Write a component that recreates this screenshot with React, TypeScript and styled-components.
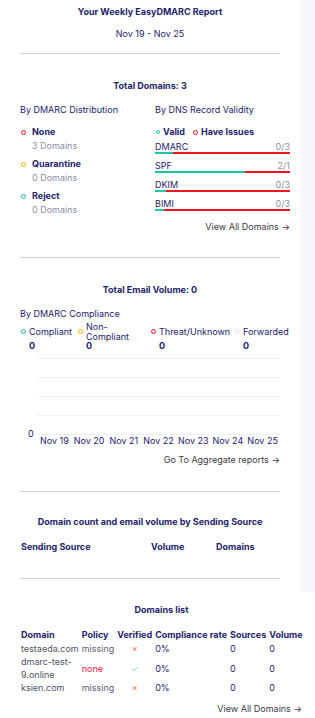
import React from "react";
import styled, { createGlobalStyle } from "styled-components";

const Global = createGlobalStyle`
  html, body { margin: 0; padding: 0; background: #ffffff; overflow-x: hidden; }
  body { font-family: Inter, "Noto Sans", "Liberation Sans", sans-serif; -webkit-font-smoothing: antialiased; }
  * { box-sizing: border-box; }
`;

const NAVY = "#23236a";
const GRAY = "#8b8fa5";
const TEAL = "#1bc5a5";
const RED = "#f0141e";
const ORANGE = "#f5b300";
const FS = "9px";

const Page = styled.div`
  width: 315px;
  color: ${NAVY};
  font-size: ${FS};
`;

const TopBand = styled.div`
  display: flex;
  background: #f6f7fb;
`;

const Card = styled.div`
  width: 300px;
  background: #ffffff;
  padding: 5px 20px 13px;
`;

const Title = styled.div<{ $mt?: number }>`
  font-weight: 700;
  line-height: 14px;
  text-align: center;
  margin-top: ${(p) => p.$mt ?? 0}px;
`;

const DateLine = styled.div`
  line-height: 14px;
  text-align: center;
  margin-top: 8px;
`;

const Divider = styled.div<{ $mt: number }>`
  height: 1px;
  background: #cfd3de;
  margin-top: ${(p) => p.$mt}px;
`;

const Sub = styled.div<{ $mt?: number }>`
  line-height: 14px;
  margin-top: ${(p) => p.$mt ?? 0}px;
`;

const TwoCols = styled.div`
  display: grid;
  grid-template-columns: 135px 135px;
  margin-top: 10px;
`;

const Ring = styled.span<{ $c: string; $s?: number }>`
  display: inline-block;
  width: ${(p) => p.$s ?? 5}px;
  height: ${(p) => p.$s ?? 5}px;
  border-radius: 50%;
  border: 1.3px solid ${(p) => p.$c};
  flex: none;
`;

const DistList = styled.div`
  display: flex;
  flex-direction: column;
  gap: 4px;
  margin-top: 8px;
`;

const DistItem = styled.div`
  display: grid;
  grid-template-columns: 11px auto;
  align-items: center;
  padding-left: 1px;
`;

const DistName = styled.div`
  font-weight: 700;
  line-height: 14px;
`;

const DistCount = styled.div`
  grid-column: 2;
  line-height: 14px;
  color: ${GRAY};
`;

const Legend = styled.div`
  display: flex;
  align-items: center;
  gap: 8px;
  margin-top: 8px;
  padding-left: 1px;
`;

const LegendItem = styled.div`
  display: flex;
  align-items: center;
  gap: 3px;
  font-weight: 700;
  line-height: 14px;
`;

const Records = styled.div`
  display: flex;
  flex-direction: column;
  gap: 6px;
  margin-top: 2px;
`;

const RecordRow = styled.div``;

const RecordHead = styled.div`
  display: flex;
  justify-content: space-between;
  line-height: 11px;
`;

const RecordCount = styled.span`
  color: ${GRAY};
`;

const Bar = styled.div`
  display: flex;
  height: 2px;
  background: ${RED};
`;

const BarFill = styled.div`
  height: 2px;
  background: ${TEAL};
`;

const LinkRight = styled.div<{ $mt: number }>`
  text-align: right;
  line-height: 14px;
  color: #3a3a45;
  margin-top: ${(p) => p.$mt}px;
`;

const CompLegend = styled.div`
  display: grid;
  grid-template-columns: 57px 73px 84px auto;
  grid-template-rows: 19px 10px;
  margin-top: 1px;
`;

const CompLabel = styled.div`
  display: flex;
  align-items: center;
  gap: 3px;
  line-height: 10px;
  padding-left: 1px;
`;

const CompValue = styled.div`
  font-weight: 700;
  line-height: 10px;
  padding-left: 9px;
`;

const Chart = styled.div`
  display: grid;
  grid-template-columns: 17px 1fr;
  margin-top: 7px;
`;

const YAxis = styled.div`
  display: flex;
  flex-direction: column;
  justify-content: flex-end;
  line-height: 10px;
  padding-left: 8px;
  padding-bottom: 7px;
`;

const Plot = styled.div`
  display: flex;
  flex-direction: column;
`;

const GridRow = styled.div`
  height: 19px;
  border-top: 1px solid #edf1f7;
`;

const GridBase = styled.div`
  height: 1px;
  background: #edf1f7;
`;

const XAxis = styled.div`
  display: grid;
  grid-template-columns: repeat(7, 1fr);
  line-height: 10px;
  text-align: center;
  margin-top: 1px;
`;

const HeadRow = styled.div`
  display: grid;
  grid-template-columns: 130px 65px auto;
  font-weight: 700;
  line-height: 14px;
  margin-top: 11px;
  padding-left: 1px;
`;

const Bottom = styled.div`
  width: 322px;
  background: #ffffff;
  padding: 11px 20px 0 21px;
`;

const Table = styled.table`
  border-collapse: collapse;
  margin-top: 11px;
  width: 260px;
  font-size: ${FS};
`;

const Th = styled.th`
  text-align: left;
  font-weight: 700;
  line-height: 13px;
  padding: 0 3px 1px 0;
  white-space: nowrap;
`;

const Td = styled.td<{ $color?: string; $center?: boolean }>`
  line-height: 13px;
  padding: 0 3px 0 0;
  color: ${(p) => p.$color ?? NAVY};
  text-align: ${(p) => (p.$center ? "center" : "left")};
  vertical-align: middle;
`;

const Mark = styled.span<{ $c: string }>`
  color: ${(p) => p.$c};
  font-size: 9px;
`;

const records = [
  { name: "DMARC", count: "0/3", valid: 13 },
  { name: "SPF", count: "2/1", valid: 67 },
  { name: "DKIM", count: "0/3", valid: 8 },
  { name: "BIMI", count: "0/3", valid: 7 },
];

const days = ["Nov 19", "Nov 20", "Nov 21", "Nov 22", "Nov 23", "Nov 24", "Nov 25"];

const domains = [
  { d: "testaeda.com", p: "missing", ok: false },
  { d: "dmarc-test-9.online", p: "none", ok: true },
  { d: "ksien.com", p: "missing", ok: false },
];

export default function App() {
  return (
    <Page>
      <Global />
      <TopBand>
        <Card>
          <Title>Your Weekly EasyDMARC Report</Title>
          <DateLine>Nov 19 - Nov 25</DateLine>
          <Divider $mt={12} />

          <Title $mt={25}>Total Domains: 3</Title>
          <TwoCols>
            <div>
              <Sub>By DMARC Distribution</Sub>
              <DistList>
                {[
                  ["None", "3 Domains", RED],
                  ["Quarantine", "0 Domains", ORANGE],
                  ["Reject", "0 Domains", TEAL],
                ].map(([n, c, col]) => (
                  <DistItem key={n}>
                    <Ring $c={col} />
                    <DistName>{n}</DistName>
                    <DistCount>{c}</DistCount>
                  </DistItem>
                ))}
              </DistList>
            </div>
            <div>
              <Sub>By DNS Record Validity</Sub>
              <Legend>
                <LegendItem>
                  <Ring $c={TEAL} $s={4} />
                  <span>Valid</span>
                </LegendItem>
                <LegendItem>
                  <Ring $c={RED} />
                  <span>Have Issues</span>
                </LegendItem>
              </Legend>
              <Records>
                {records.map((r) => (
                  <RecordRow key={r.name}>
                    <RecordHead>
                      <span>{r.name}</span>
                      <RecordCount>{r.count}</RecordCount>
                    </RecordHead>
                    <Bar>
                      <BarFill style={{ width: `${r.valid}%` }} />
                    </Bar>
                  </RecordRow>
                ))}
              </Records>
              <LinkRight $mt={9}>View All Domains →</LinkRight>
            </div>
          </TwoCols>
          <Divider $mt={23} />

          <Title $mt={25}>Total Email Volume: 0</Title>
          <Sub $mt={10}>By DMARC Compliance</Sub>
          <CompLegend>
            <CompLabel>
              <Ring $c={TEAL} />
              <span>Compliant</span>
            </CompLabel>
            <CompLabel>
              <Ring $c={ORANGE} />
              <span>
                Non-
                <br />
                Compliant
              </span>
            </CompLabel>
            <CompLabel>
              <Ring $c={RED} />
              <span>Threat/Unknown</span>
            </CompLabel>
            <CompLabel>
              <Ring $c="#e4e7ee" />
              <span>Forwarded</span>
            </CompLabel>
            <CompValue>0</CompValue>
            <CompValue>0</CompValue>
            <CompValue>0</CompValue>
            <CompValue>0</CompValue>
          </CompLegend>
          <Chart>
            <YAxis>
              <span>0</span>
            </YAxis>
            <Plot>
              <GridRow />
              <GridRow />
              <GridRow />
              <GridRow />
              <GridBase />
              <XAxis>
                {days.map((d) => (
                  <span key={d}>{d}</span>
                ))}
              </XAxis>
            </Plot>
          </Chart>
          <LinkRight $mt={7}>Go To Aggregate reports →</LinkRight>
          <Divider $mt={24} />

          <Title $mt={23}>Domain count and email volume by Sending Source</Title>
          <HeadRow>
            <span>Sending Source</span>
            <span>Volume</span>
            <span>Domains</span>
          </HeadRow>
          <Divider $mt={24} />
        </Card>
      </TopBand>

      <Bottom>
        <Title>Domains list</Title>
        <Table>
          <thead>
            <tr>
              <Th>Domain</Th>
              <Th>Policy</Th>
              <Th>Verified</Th>
              <Th>Compliance rate</Th>
              <Th>Sources</Th>
              <Th>Volume</Th>
            </tr>
          </thead>
          <tbody>
            {domains.map((r) => (
              <tr key={r.d}>
                <Td $color="#4d5366">{r.d}</Td>
                <Td $color={r.p === "none" ? "#ee1648" : "#5c6175"}>{r.p}</Td>
                <Td $center>
                  <Mark $c={r.ok ? "#7fdcc4" : "#ff6a4d"}>{r.ok ? "✓" : "×"}</Mark>
                </Td>
                <Td>0%</Td>
                <Td>0</Td>
                <Td>0</Td>
              </tr>
            ))}
          </tbody>
        </Table>
        <LinkRight $mt={8}>View All Domains →</LinkRight>
      </Bottom>
    </Page>
  );
}
